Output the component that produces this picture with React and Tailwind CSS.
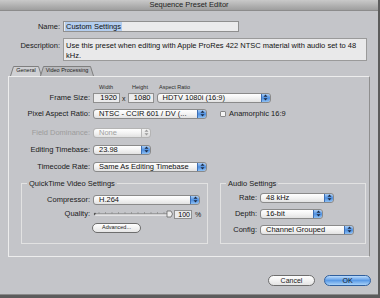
import React from "react";

const font = { fontFamily: '"Liberation Sans", Arial, sans-serif' };

// aqua style up/down stepper on the right of a popup
const Stepper = ({ disabled }) => (
  <div
    className={
      "w-[9px] h-full rounded-r-[3px] flex items-center justify-center border-l " +
      (disabled
        ? "bg-gradient-to-b from-[#f4f4f4] to-[#dcdcdc] border-[#b8b8b8]"
        : "bg-gradient-to-b from-[#a9cdf5] via-[#4d8fe0] to-[#8fc0f2] border-[#3d6fb5]")
    }
  >
    <svg width="5" height="7" viewBox="0 0 5 7">
      <path d="M2.5 0.5 L4.5 2.8 L0.5 2.8 Z" fill={disabled ? "#9a9a9a" : "#1b2a44"} />
      <path d="M2.5 6.5 L4.5 4.2 L0.5 4.2 Z" fill={disabled ? "#9a9a9a" : "#1b2a44"} />
    </svg>
  </div>
);

const Popup = ({ value, w, disabled }) => (
  <div
    className={
      "h-[10px] flex items-stretch rounded-[3px] border " +
      (disabled ? "border-[#b4b4b4]" : "border-[#8a8a8a]")
    }
    style={{ width: w }}
  >
    <div
      className={
        "flex-1 flex items-center pl-[5px] text-[7.5px] leading-none rounded-l-[3px] bg-gradient-to-b from-white via-[#f3f3f3] to-[#e2e2e2] whitespace-nowrap overflow-hidden " +
        (disabled ? "text-[#a0a0a0]" : "text-[#111]")
      }
    >
      {value}
    </div>
    <Stepper disabled={disabled} />
  </div>
);

const Row = ({ label, lw, className = "", disabled, children }) => (
  <div className={"flex items-center " + className}>
    <div
      className={
        "text-right text-[7.5px] leading-none pr-[3px] whitespace-nowrap " +
        (disabled ? "text-[#9c9c9c]" : "text-[#1a1a1a]")
      }
      style={{ width: lw }}
    >
      {label}
    </div>
    {children}
  </div>
);

const Group = ({ title, className = "", children }) => (
  <div className={"flex flex-col " + className}>
    <div className="flex items-center h-[8px]">
      <div className="w-[6px] border-t border-[#e2e2e2]" />
      <span className="px-[2px] text-[7.5px] leading-none text-[#1a1a1a] whitespace-nowrap">
        {title}
      </span>
      <div className="flex-1 border-t border-[#e2e2e2]" />
    </div>
    <div className="flex-1 border-l border-r border-b border-[#e2e2e2] -mt-[4px] pt-[7px]">
      {children}
    </div>
  </div>
);

const Tab = ({ label, active, w, className = "" }) => (
  <div
    className={"relative h-[10px] flex items-center justify-center " + className}
    style={{ width: w }}
  >
    <svg className="absolute inset-0" width={w} height="10" viewBox={`0 0 ${w} 10`}>
      <path
        d={`M0.5 10 L3.5 0.5 L${w - 3.5} 0.5 L${w - 0.5} 10`}
        fill={active ? "#cfd0d3" : "#b9babd"}
        stroke="#7f7f7f"
        strokeWidth="1"
      />
    </svg>
    <span className="relative text-[5.5px] leading-none text-[#222]">{label}</span>
  </div>
);

const Slider = () => (
  <svg width="80" height="8" viewBox="0 0 80 8">
    <circle cx="2" cy="4" r="1.2" fill="#555" />
    <line x1="2" y1="4" x2="75" y2="4" stroke="#777" strokeWidth="1" />
    <line x1="2" y1="5" x2="75" y2="5" stroke="#fff" strokeWidth="1" />
    {Array.from({ length: 11 }).map((_, i) => (
      <line key={i} x1={6 + i * 6.5} y1="2" x2={6 + i * 6.5} y2="4" stroke="#8a8a8a" strokeWidth="0.7" />
    ))}
    <path d="M74 1 L78 1 L79.5 4 L78 7 L74 7 Z" fill="#eee" stroke="#666" strokeWidth="0.8" />
  </svg>
);

export default function App() {
  return (
    <div className="w-[380px] h-[298px] bg-[#5c5c5c] overflow-hidden" style={font}>
      <div className="w-[378px] h-[295px] bg-[#c4c5c9] flex flex-col border-b border-[#8a8a8a]">
        {/* title bar */}
        <div className="h-[11px] bg-gradient-to-b from-[#c9c9c9] to-[#9e9e9e] border-b border-[#8c8c8c] flex items-center justify-center">
          <span className="text-[7.5px] leading-none text-[#1e1e1e]">Sequence Preset Editor</span>
        </div>

        {/* name */}
        <Row label="Name:" lw={63} className="mt-[10px]">
          <div className="w-[176px] h-[11px] bg-[#ebebec] border border-[#8f8f8f] flex items-center px-[1px]">
            <span className="bg-[#b3cdee] text-[7.5px] leading-none text-[#111] px-[1px] py-[1px]">
              Custom Settings
            </span>
          </div>
        </Row>

        {/* description */}
        <div className="flex mt-[6px]">
          <div className="w-[63px] text-right text-[7.5px] leading-none pr-[3px] pt-[4px] text-[#1a1a1a]">
            Description:
          </div>
          <div className="w-[304px] h-[23px] bg-[#e9e9ea] border border-[#9a9a9a] px-[2px] pt-[2px] text-[7.5px] leading-[10px] text-[#111]">
            Use this preset when editing with Apple ProRes 422 NTSC material with audio set to 48 kHz.
          </div>
        </div>

        {/* tabs */}
        <div className="flex ml-[10px] mt-[5px]">
          <Tab label="General" active w={32} />
          <Tab label="Video Processing" w={54} className="-ml-[2px]" />
        </div>

        {/* tab panel */}
        <div className="ml-[8px] w-[362px] h-[181px] border-t border-l border-b border-[#ededed] border-r border-r-[#8f8f8f] flex flex-col">
          {/* frame size header */}
          <div className="flex mt-[8px] text-[5.5px] leading-none text-[#2a2a2a]">
            <span className="ml-[90px]">Width</span>
            <span className="ml-[19px]">Height</span>
            <span className="ml-[11px]">Aspect Ratio</span>
          </div>
          <Row label="Frame Size:" lw={84} className="mt-[2px]">
            <div className="w-[27px] h-[10px] bg-[#ebebec] border border-[#8f8f8f] text-[7.5px] leading-none flex items-center justify-end pr-[2px]">
              1920
            </div>
            <span className="mx-[2px] text-[7px] leading-none text-[#222] mt-[2px]">x</span>
            <div className="w-[26px] h-[10px] bg-[#ebebec] border border-[#8f8f8f] text-[7.5px] leading-none flex items-center justify-end pr-[2px]">
              1080
            </div>
            <div className="ml-[3px]">
              <Popup value="HDTV 1080i (16:9)" w={114} />
            </div>
          </Row>
          <Row label="Pixel Aspect Ratio:" lw={84} className="mt-[6px]">
            <Popup value="NTSC - CCIR 601 / DV (..." w={114} />
            <div className="ml-[13px] w-[6px] h-[6px] bg-[#f4f4f4] border border-[#8a8a8a] rounded-[1px]" />
            <span className="ml-[3px] text-[7.5px] leading-none text-[#1a1a1a]">Anamorphic 16:9</span>
          </Row>
          <Row label="Field Dominance:" lw={84} disabled className="mt-[9px]">
            <Popup value="None" w={58} disabled />
          </Row>
          <Row label="Editing Timebase:" lw={84} className="mt-[7px]">
            <Popup value="23.98" w={58} />
          </Row>
          <Row label="Timecode Rate:" lw={84} className="mt-[7px]">
            <Popup value="Same As Editing Timebase" w={114} />
          </Row>

          {/* groups */}
          <div className="flex mt-[8px] ml-[12px]">
            <Group title="QuickTime Video Settings" className="w-[187px] h-[64px]">
              <Row label="Compressor:" lw={71} className="mt-[4px]">
                <Popup value="H.264" w={107} />
              </Row>
              <Row label="Quality:" lw={71} className="mt-[5px]">
                <Slider />
                <div className="ml-[1px] w-[18px] h-[9px] bg-[#ebebec] border border-[#8f8f8f] text-[7px] leading-none flex items-center justify-end pr-[1px]">
                  100
                </div>
                <span className="ml-[3px] text-[7px] leading-none text-[#222]">%</span>
              </Row>
              <div className="flex mt-[4px] ml-[70px]">
                <div className="w-[49px] h-[10px] rounded-full border border-[#6e6e6e] bg-gradient-to-b from-white to-[#e6e6e6] flex items-center justify-center text-[5.5px] leading-none text-[#1a1a1a]">
                  Advanced...
                </div>
              </div>
            </Group>
            <Group title="Audio Settings" className="w-[146px] h-[64px] ml-[12px]">
              <Row label="Rate:" lw={39} className="mt-[2px]">
                <Popup value="48 kHz" w={74} />
              </Row>
              <Row label="Depth:" lw={39} className="mt-[6px]">
                <Popup value="16-bit" w={63} />
              </Row>
              <Row label="Config:" lw={39} className="mt-[6px]">
                <Popup value="Channel Grouped" w={94} />
              </Row>
            </Group>
          </div>
        </div>

        {/* buttons */}
        <div className="flex justify-end mt-[18px] mr-[7px] gap-[9px]">
          <div className="w-[47px] h-[11px] rounded-full border border-[#6e6e6e] bg-gradient-to-b from-white via-[#f2f2f2] to-[#e4e4e4] flex items-center justify-center text-[7px] leading-none text-[#1a1a1a]">
            Cancel
          </div>
          <div className="w-[47px] h-[11px] rounded-full border border-[#2f5f9e] bg-gradient-to-b from-[#bcdcfb] via-[#5a9ae6] to-[#a9d2f7] flex items-center justify-center text-[7px] leading-none text-[#0d1a2d]">
            OK
          </div>
        </div>
      </div>
    </div>
  );
}
